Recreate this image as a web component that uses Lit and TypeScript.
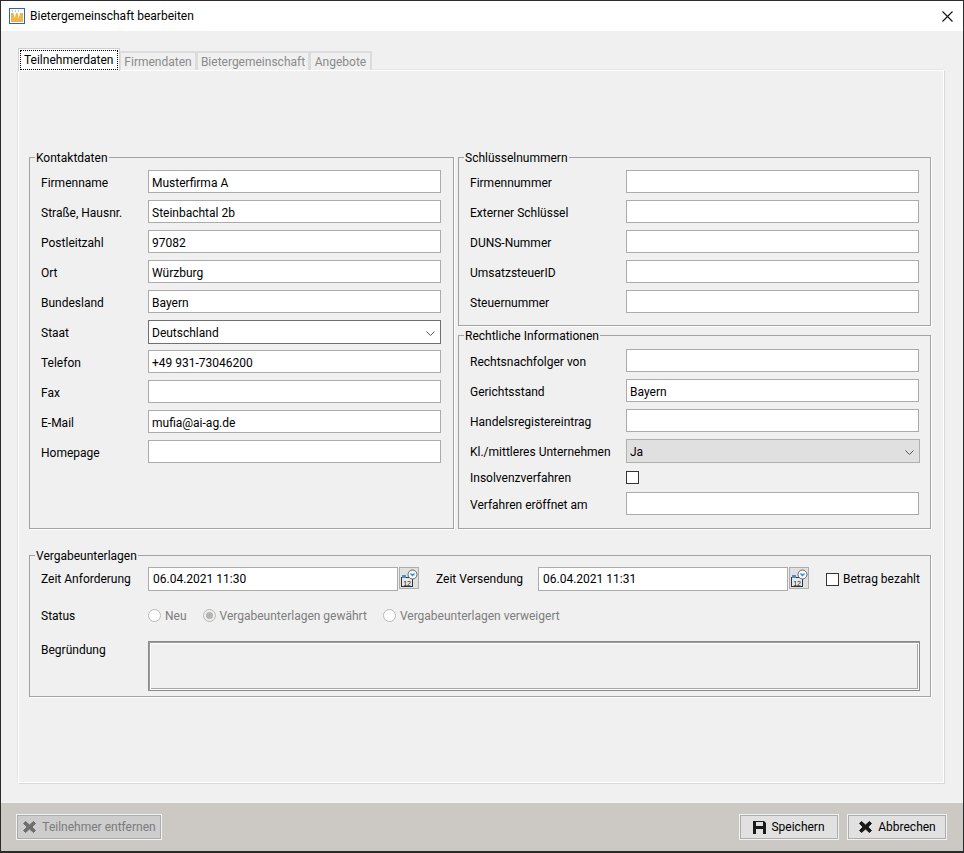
import { LitElement, html, css, svg } from 'lit';
import { customElement } from 'lit/decorators.js';

const contact = [
  ['Firmenname', 'Musterfirma A'],
  ['Straße, Hausnr.', 'Steinbachtal 2b'],
  ['Postleitzahl', '97082'],
  ['Ort', 'Würzburg'],
  ['Bundesland', 'Bayern'],
  ['Staat', 'Deutschland', 'select'],
  ['Telefon', '+49 931-73046200'],
  ['Fax', ''],
  ['E-Mail', 'mufia@ai-ag.de'],
  ['Homepage', ''],
];
const keys = ['Firmennummer', 'Externer Schlüssel', 'DUNS-Nummer', 'UmsatzsteuerID', 'Steuernummer'];

const chevron = html`<svg class="chev" width="9" height="5" viewBox="0 0 9 5"><path d="M.5.5l4 4 4-4" fill="none" stroke="#555" stroke-width="1"/></svg>`;

const calendar = svg`
  <rect x="1.500" y="8.500" width="11" height="9" fill="#e8e8e8" stroke="#333"/>
  <rect x="2" y="6" width="4" height="3" fill="#4a90c8"/>
  <text x="3.200" y="16.500" font-size="7" font-family="Liberation Sans" fill="#222">12</text>
  <circle cx="12.500" cy="5.500" r="4.500" fill="#f4f8fb" stroke="#666"/>
  <path d="M10.500 4.500l2 2 2-2" fill="none" stroke="#3a8ed0" stroke-width="1.400"/>`;

@customElement('app-root')
export class AppRoot extends LitElement {
  static styles = css`
    :host {
      display: block;
      width: 964px;
      height: 853px;
      font: 12px Roboto, "Open Sans", sans-serif;
      color: #000;
      box-sizing: border-box;
      border: 1px solid #2b2b2b;
      border-width: 1px 1px 2px 1px;
    }
    * { box-sizing: border-box; }
    .window { display: flex; flex-direction: column; height: 100%; background: #f0f0f0; }
    .title { height: 30px; flex: none; background: #fff; display: flex; align-items: center; padding: 0 10px 0 8px; gap: 5px; }
    .title .name { flex: 1; }
    .main { flex: 1; padding: 17px 19px 19px 17px; display: flex; flex-direction: column; }
    .tabs { display: flex; height: 22px; align-items: flex-end; position: relative; z-index: 1; }
    .tab { height: 19px; border: 2px solid #dcdcdc; border-bottom: 0; border-left-width: 1px; color: #8a8a8a; line-height: 18px; background: #f0f0f0; text-align: center; }
    .tab:nth-child(2) { width: 77px; }
    .tab:nth-child(3) { width: 113px; }
    .tab:nth-child(4) { width: 62px; }
    .tab.active { height: 23px; width: 102px; padding: 1px; color: #000; background: #fff; border: 1px solid #d0d0d0; border-bottom: 0; margin-bottom: -1px; text-align: left; }
    .tab.active span { display: block; height: 20px; line-height: 19px; padding-left: 3px; border: 1px dotted #000; }
    .panel { flex: 1; background: #f0f0f0; border: 1px solid #fff; box-shadow: 1px 1px 0 #d8d8d8, -1px -1px 0 #e4e4e4; padding: 77px 12px 0 10px; }
    .cols { display: grid; grid-template-columns: 425px 473px; gap: 4px; }
    .right { display: flex; flex-direction: column; }
    fieldset { margin: 0; min-width: 0; border: 1px solid #a3a3a3; padding: 0 11px; box-shadow: 1px 1px 0 #fff; }
    legend { padding: 2px 1px 0; margin-left: -6px; line-height: 16px; }
    .rows { display: grid; row-gap: 7px; padding-top: 4px; }
    .legal .rows { padding-top: 5px; }
    .row { display: grid; align-items: center; height: 23px; }
    .row > span:first-child { padding-top: 2px; }
    .row.checkrow { height: 16px; }
    .contact .row { grid-template-columns: 107px 293px; }
    .legal .row, .keys .row { grid-template-columns: 156px 293px; }
    .input { height: 23px; background: #fff; border: 1px solid #ababab; padding: 1px 3px 0; line-height: 22px; white-space: nowrap; overflow: hidden; }
    .select { height: 24px; display: flex; align-items: center; justify-content: space-between; background: #fff; border: 1px solid #707070; padding: 2px 5px 0 3px; }
    .select.dis { width: 294px; background: #e0e0e0; border-color: #b0b0b0; }
    .keys { height: 178px; }
    .legal { height: 203px; }
    .contact { height: 381px; }
    .check { width: 13px; height: 13px; background: #fff; border: 1px solid #333; display: block; }
    .award { margin-top: 17px; height: 151px; padding-right: 10px; }
    .award-row { display: flex; align-items: center; height: 24px; margin-top: 3px; }
    .award-row .lab { width: 107px; }
    .input.date { width: 250px; height: 24px; padding: 0 4px; }
    .cal { width: 20px; height: 22px; align-self: flex-start; border: 1px solid #adadad; background: #e1e1e1; margin-left: 1px; display: flex; align-items: center; justify-content: center; }
    .lab2 { margin-left: 17px; width: 102px; }
    .pay { margin-left: 17px; display: flex; align-items: center; gap: 4px; white-space: nowrap; }
    .status { display: flex; align-items: center; height: 23px; margin-top: 13px; color: #7d7d7d; }
    .status .lab { width: 107px; color: #000; }
    .radio { width: 13px; height: 13px; border-radius: 50%; border: 1px solid #b8b8b8; background: #fff; margin-right: 4px; display: flex; align-items: center; justify-content: center; }
    .radio.on { background: #eee; }
    .radio.on i { width: 7px; height: 7px; border-radius: 50%; background: #b4b4b4; }
    .opt { display: flex; align-items: center; margin-right: 16px; }
    .reason { display: flex; margin-top: 14px; }
    .reason .lab { width: 107px; padding-top: 2px; }
    .area { width: 773px; height: 50px; border: 1px solid #8c8c8c; box-shadow: inset 1px 1px 0 #9a9a9a, inset -1px -1px 0 #fafafa, inset 2px 2px 0 #fff, inset -2px -2px 0 #a8a8a8; background: #f0f0f0; }
    .footer { height: 49px; flex: none; background: #ccc9c4; border-top: 1px solid #f4f4f4; display: flex; align-items: center; justify-content: space-between; padding: 0 17px 0 16px; }
    .btn { height: 24px; display: flex; align-items: center; justify-content: center; gap: 5px; background: #e1e1e1; border: 1px solid #adadad; outline: 1px solid #f2f2f2; }
    .btn.dis { width: 144px; background: #cdcdcd; color: #7b7b7b; }
    .btn.n { width: 98px; }
    .btn-group { display: flex; gap: 10px; }
  `;

  row(label: string, value: string) {
    return html`<div class="row"><span>${label}</span><div class="input">${value}</div></div>`;
  }

  render() {
    return html`
      <div class="window">
        <div class="title">
          <svg width="16" height="16" viewBox="0 0 16 16">
            <rect x=".5" y=".5" width="15" height="15" fill="#fff" stroke="#2f66a8"/>
            <path d="M2 5h2.500l1.300 5.500L7 5h1.500l1.200 5.500L11 5h3v9H2z" fill="#efb548"/>
            <path d="M3 3h1M6 3h1M9 3h1" stroke="#888"/>
          </svg>
          <span class="name">Bietergemeinschaft bearbeiten</span>
          <svg width="11" height="11" viewBox="0 0 11 11"><path d="M.5.5l10 10M10.500.5l-10 10" stroke="#111" stroke-width="1.100"/></svg>
        </div>
        <div class="main">
          <div class="tabs">
            <div class="tab active"><span>Teilnehmerdaten</span></div>
            <div class="tab">Firmendaten</div>
            <div class="tab">Bietergemeinschaft</div>
            <div class="tab">Angebote</div>
          </div>
          <div class="panel">
            <div class="cols">
              <fieldset class="contact">
                <legend>Kontaktdaten</legend>
                <div class="rows">
                  ${contact.map(([l, v, t]) => t
                    ? html`<div class="row"><span>${l}</span><div class="select">${v}${chevron}</div></div>`
                    : this.row(l, v))}
                </div>
              </fieldset>
              <div class="right">
                <fieldset class="keys">
                  <legend>Schlüsselnummern</legend>
                  <div class="rows">${keys.map(k => this.row(k, ''))}</div>
                </fieldset>
                <fieldset class="legal">
                  <legend>Rechtliche Informationen</legend>
                  <div class="rows">
                    ${this.row('Rechtsnachfolger von', '')}
                    ${this.row('Gerichtsstand', 'Bayern')}
                    ${this.row('Handelsregistereintrag', '')}
                    <div class="row"><span>Kl./mittleres Unternehmen</span><div class="select dis">Ja${chevron}</div></div>
                    <div class="row checkrow"><span>Insolvenzverfahren</span><span class="check"></span></div>
                    ${this.row('Verfahren eröffnet am', '')}
                  </div>
                </fieldset>
              </div>
            </div>
            <fieldset class="award">
              <legend>Vergabeunterlagen</legend>
              <div class="award-row">
                <span class="lab">Zeit Anforderung</span>
                <div class="input date">06.04.2021 11:30</div>
                <div class="cal"><svg width="18" height="18" viewBox="0 0 18 18">${calendar}</svg></div>
                <span class="lab2">Zeit Versendung</span>
                <div class="input date">06.04.2021 11:31</div>
                <div class="cal"><svg width="18" height="18" viewBox="0 0 18 18">${calendar}</svg></div>
                <div class="pay"><span class="check"></span>Betrag bezahlt</div>
              </div>
              <div class="status">
                <span class="lab">Status</span>
                <div class="opt"><span class="radio"></span>Neu</div>
                <div class="opt"><span class="radio on"><i></i></span>Vergabeunterlagen gewährt</div>
                <div class="opt"><span class="radio"></span>Vergabeunterlagen verweigert</div>
              </div>
              <div class="reason">
                <span class="lab">Begründung</span>
                <div class="area"></div>
              </div>
            </fieldset>
          </div>
        </div>
        <div class="footer">
          <div class="btn dis">
            <svg width="15" height="14" viewBox="0 0 15 14"><path d="M1.500 3.500l2-2L7.500 5l4-3.500 2 2L10 7l3.500 3.500-2 2-4-3.500-4 3.500-2-2L5 7z" fill="#6f6f6f" stroke="#6f6f6f"/></svg>
            Teilnehmer entfernen
          </div>
          <div class="btn-group">
            <div class="btn n">
              <svg width="13" height="13" viewBox="0 0 13 13"><path fill-rule="evenodd" d="M0 0h11l2 2v11H0zM3 1v4h7V1zM3 8v5h7V8z" fill="#1a1a1a"/></svg>
              Speichern
            </div>
            <div class="btn n">
              <svg width="15" height="14" viewBox="0 0 15 14"><path d="M1.500 3.500l2-2L7.500 5l4-3.500 2 2L10 7l3.500 3.500-2 2-4-3.500-4 3.500-2-2L5 7z" fill="#1a1a1a" stroke="#1a1a1a"/></svg>
              Abbrechen
            </div>
          </div>
        </div>
      </div>
    `;
  }
}
